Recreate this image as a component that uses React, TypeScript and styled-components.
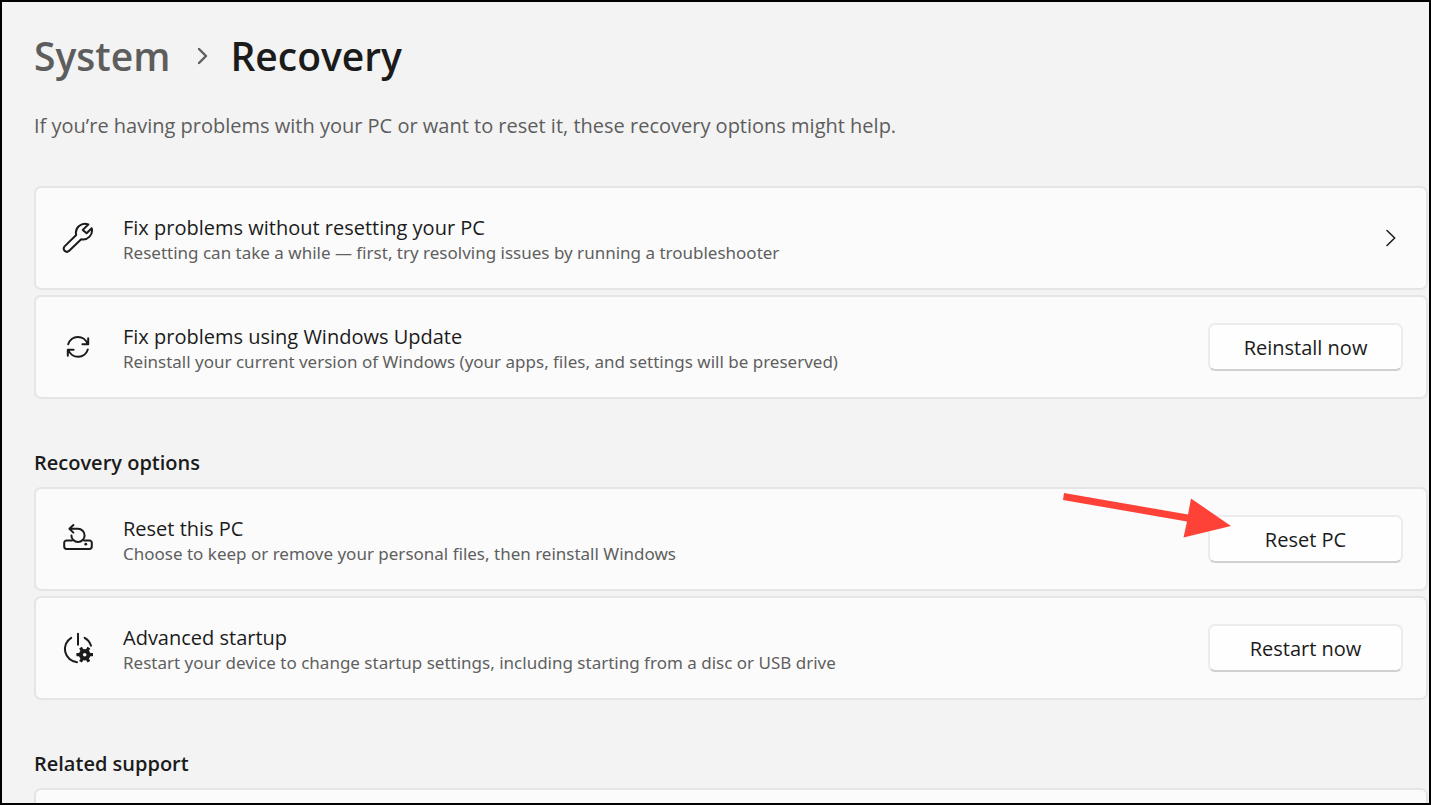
import React from "react";
import styled, { createGlobalStyle } from "styled-components";

const GlobalStyle = createGlobalStyle`
  *, *::before, *::after { box-sizing: border-box; }
  body {
    margin: 0;
    background: #f3f3f3;
    color: #1b1b1b;
    font-family: "Segoe UI", "Open Sans", "Noto Sans", sans-serif;
  }
`;

const Window = styled.main`
  height: 100vh;
  overflow: hidden;
  border: 2px solid #000;
  padding: 26px 1px 0 32px;
`;

const Breadcrumb = styled.nav`
  display: flex;
  align-items: center;
  height: 56px;
  font-size: 39px;
  line-height: 56px;
  font-weight: 600;
`;

const Crumb = styled.a`
  color: #5d5d5d;
  text-decoration: none;
`;

const Title = styled.h1`
  margin: 0;
  font: inherit;
`;

const CrumbChevron = styled.svg`
  width: 14px;
  height: 18px;
  margin: 0 21px 0 25px;
  color: #5d5d5d;
`;

const Intro = styled.p`
  margin: 28px 0 46px;
  font-size: 20px;
  line-height: 28px;
  color: #5d5d5d;
`;

const SectionTitle = styled.h2`
  margin: 50px 0 10px;
  font-size: 20px;
  line-height: 28px;
  font-weight: 600;
`;

const List = styled.div`
  display: flex;
  flex-direction: column;
  gap: 5px;
`;

const Card = styled.section`
  display: flex;
  align-items: center;
  min-height: 104px;
  padding: 0 23px 0 26px;
  border: 2px solid #e5e5e5;
  border-radius: 7px;
  background: #fbfbfb;
`;

const CardIcon = styled.svg`
  flex: none;
  width: 32px;
  height: 32px;
  margin-right: 29px;
`;

const CardText = styled.div`
  flex: 1;
  min-width: 0;
  padding-top: 4px;
`;

const CardTitle = styled.h3`
  margin: 0;
  font-size: 20px;
  line-height: 26px;
  font-weight: 400;
`;

const CardNote = styled.p`
  margin: 0;
  font-family: "Segoe UI", "Noto Sans", sans-serif;
  font-size: 17px;
  line-height: 24px;
  color: #5f5f5f;
`;

const Action = styled.div`
  position: relative;
  flex: none;
`;

const ActionButton = styled.button`
  display: block;
  width: 195px;
  height: 48px;
  padding: 2px 0 0;
  border: 2px solid #ececec;
  border-bottom-color: #d0d0d0;
  border-radius: 7px;
  background: #fefefe;
  color: #1b1b1b;
  font: inherit;
  font-size: 20px;
  line-height: 28px;
`;

const OpenButton = styled.button`
  display: flex;
  padding: 0;
  border: 0;
  background: none;
  color: #1b1b1b;
`;

const Pointer = styled.svg`
  position: absolute;
  right: 172px;
  bottom: 23px;
  width: 170px;
  height: 50px;
  pointer-events: none;
`;

const line = {
  fill: "none",
  stroke: "currentColor",
  strokeWidth: 2,
  strokeLinecap: "round" as const,
  strokeLinejoin: "round" as const,
};

const WrenchIcon = () => (
  <CardIcon viewBox="0 0 32 32" aria-hidden="true" {...line}>
    <path d="M26.3 2.5A9 9 0 0 0 14.2 13L2.6 24.4a3.4 3.4 0 0 0 0 4.4 3.3 3.3 0 0 0 4.6 0l12-11.5A9 9 0 0 0 29.7 6.2L24.6 11.3L20.8 7.9L26.3 2.5Z" />
  </CardIcon>
);

const UpdateIcon = () => (
  <CardIcon viewBox="0 0 32 32" aria-hidden="true" {...line}>
    <path d="M6.2 13.3A10.2 10.2 0 0 1 25.6 12.8M26.2 7.2V13.3H20.4M25.8 18.5A10.2 10.2 0 0 1 6.4 19M5.8 24.8V18.8H11.6" />
  </CardIcon>
);

const ResetIcon = () => (
  <CardIcon viewBox="0 0 32 32" aria-hidden="true" {...line}>
    <path d="M10 17.4H4.6A2.4 2.4 0 0 0 2.2 19.8v3.8a2.4 2.4 0 0 0 2.4 2.4h22.8a2.4 2.4 0 0 0 2.4-2.4v-3.8a2.4 2.4 0 0 0-2.4-2.4H22" />
    <path d="M11.4 2 7.4 5.8l4 3.8M7.6 5.8H16a6.6 6.6 0 1 1-6.6 6.6" />
    <circle cx="23.8" cy="21.2" r="1.4" fill="currentColor" stroke="none" />
  </CardIcon>
);

const StartupIcon = () => (
  <CardIcon viewBox="0 0 32 32" aria-hidden="true" {...line}>
    <path d="M16 1.8v11M9.2 5.8A13.2 13.2 0 0 0 15 30.2M22.6 5.8a13.4 13.4 0 0 1 6.4 8" />
    <path
      d="M14.4 22.7H31M18.5 15.6 26.9 29.8M26.9 15.6 18.5 29.8"
      strokeLinecap="butt"
      strokeWidth="3.2"
    />
    <circle cx="22.7" cy="22.7" r="3.8" strokeWidth="4" />
    <circle cx="22.7" cy="22.7" r="1.8" fill="#fbfbfb" stroke="none" />
  </CardIcon>
);

const ArrowPointer = () => (
  <Pointer viewBox="0 0 170 50" aria-hidden="true">
    <path d="M3 3 2 10 126 31.5 122.5 47.5 170 36 130 8.5 127 24.5Z" fill="#ff4238" />
  </Pointer>
);

type OptionProps = {
  icon: React.ReactNode;
  title: string;
  note: string;
  children: React.ReactNode;
};

const Option = ({ icon, title, note, children }: OptionProps) => (
  <Card>
    {icon}
    <CardText>
      <CardTitle>{title}</CardTitle>
      <CardNote>{note}</CardNote>
    </CardText>
    <Action>{children}</Action>
  </Card>
);

export default function App() {
  return (
    <>
      <GlobalStyle />
      <Window>
        <Breadcrumb aria-label="Breadcrumb">
          <Crumb href="#system">System</Crumb>
          <CrumbChevron viewBox="0 0 14 18" aria-hidden="true" {...line} strokeWidth={2.4}>
            <path d="m4 2 7 7-7 7" />
          </CrumbChevron>
          <Title>Recovery</Title>
        </Breadcrumb>
        <Intro>
          If you’re having problems with your PC or want to reset it, these recovery options might help.
        </Intro>
        <List>
          <Option
            icon={<WrenchIcon />}
            title="Fix problems without resetting your PC"
            note="Resetting can take a while — first, try resolving issues by running a troubleshooter"
          >
            <OpenButton type="button" aria-label="Open troubleshooter">
              <svg width="22" height="20" viewBox="0 0 22 20" {...line} strokeWidth={1.5}>
                <path d="m6 2.5 7.7 7.5-7.7 7.5" />
              </svg>
            </OpenButton>
          </Option>
          <Option
            icon={<UpdateIcon />}
            title="Fix problems using Windows Update"
            note="Reinstall your current version of Windows (your apps, files, and settings will be preserved)"
          >
            <ActionButton type="button">Reinstall now</ActionButton>
          </Option>
        </List>
        <SectionTitle>Recovery options</SectionTitle>
        <List>
          <Option
            icon={<ResetIcon />}
            title="Reset this PC"
            note="Choose to keep or remove your personal files, then reinstall Windows"
          >
            <ActionButton type="button">Reset PC</ActionButton>
            <ArrowPointer />
          </Option>
          <Option
            icon={<StartupIcon />}
            title="Advanced startup"
            note="Restart your device to change startup settings, including starting from a disc or USB drive"
          >
            <ActionButton type="button">Restart now</ActionButton>
          </Option>
        </List>
        <SectionTitle>Related support</SectionTitle>
        <List>
          <Card />
        </List>
      </Window>
    </>
  );
}
